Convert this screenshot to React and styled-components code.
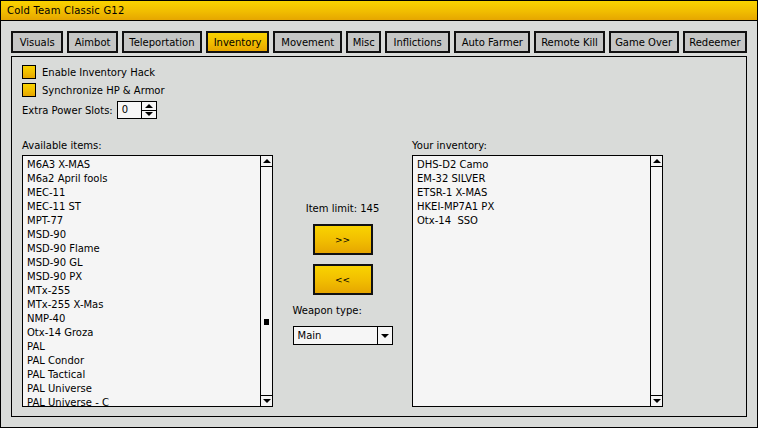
import React from 'react';
import styled, { createGlobalStyle } from 'styled-components';

const tabs = [
  { name: 'Visuals', w: 53 },
  { name: 'Aimbot', w: 51 },
  { name: 'Teleportation', w: 81 },
  { name: 'Inventory', w: 64 },
  { name: 'Movement', w: 70 },
  { name: 'Misc', w: 35 },
  { name: 'Inflictions', w: 66 },
  { name: 'Auto Farmer', w: 77 },
  { name: 'Remote Kill', w: 71 },
  { name: 'Game Over', w: 71 },
  { name: 'Redeemer', w: 65 },
];

const available = [
  'M6A3 X-MAS',
  'M6a2 April fools',
  'MEC-11',
  'MEC-11 ST',
  'MPT-77',
  'MSD-90',
  'MSD-90 Flame',
  'MSD-90 GL',
  'MSD-90 PX',
  'MTx-255',
  'MTx-255 X-Mas',
  'NMP-40',
  'Otx-14 Groza',
  'PAL',
  'PAL Condor',
  'PAL Tactical',
  'PAL Universe',
  'PAL Universe - C',
];

const owned = ['DHS-D2 Camo', 'EM-32 SILVER', 'ETSR-1 X-MAS', 'HKEI-MP7A1 PX', 'Otx-14  SSO'];

const App = () => {
  return (
    <>
      <GlobalStyle />
      <Window>
        <TitleBar>Cold Team Classic G12</TitleBar>
        <Body>
          <TabRow>
            {tabs.map((t) => (
              <Tab key={t.name} $w={t.w} $active={t.name === 'Inventory'}>
                {t.name}
              </Tab>
            ))}
          </TabRow>
          <Panel>
            <CheckRow>
              <CheckBox />
              <span>Enable Inventory Hack</span>
            </CheckRow>
            <CheckRow>
              <CheckBox />
              <span>Synchronize HP &amp; Armor</span>
            </CheckRow>
            <SpinRow>
              <span>Extra Power Slots:</span>
              <Spinner>
                <SpinValue>0</SpinValue>
                <SpinArrows>
                  <SpinButton>
                    <Arrow $up />
                  </SpinButton>
                  <SpinButton>
                    <Arrow />
                  </SpinButton>
                </SpinArrows>
              </Spinner>
            </SpinRow>

            <Lists>
              <ListColumn>
                <Label>Available items:</Label>
                <ListBox>
                  <Items>
                    {available.map((i) => (
                      <Item key={i}>{i}</Item>
                    ))}
                  </Items>
                  <ScrollBar>
                    <ScrollButton>
                      <Arrow $up />
                    </ScrollButton>
                    <Track>
                      <Thumb />
                    </Track>
                    <ScrollButton $bottom>
                      <Arrow />
                    </ScrollButton>
                  </ScrollBar>
                </ListBox>
              </ListColumn>

              <Middle>
                <Limit>Item limit: 145</Limit>
                <MoveButton>&gt;&gt;</MoveButton>
                <MoveButton>&lt;&lt;</MoveButton>
                <TypeBlock>
                  <TypeLabel>Weapon type:</TypeLabel>
                  <Select>
                    <SelectValue>Main</SelectValue>
                    <SelectArrow>
                      <Arrow />
                    </SelectArrow>
                  </Select>
                </TypeBlock>
              </Middle>

              <ListColumn>
                <Label>Your inventory:</Label>
                <ListBox>
                  <Items>
                    {owned.map((i) => (
                      <Item key={i}>{i}</Item>
                    ))}
                  </Items>
                  <ScrollBar>
                    <ScrollButton>
                      <Arrow $up />
                    </ScrollButton>
                    <Track />
                    <ScrollButton $bottom>
                      <Arrow />
                    </ScrollButton>
                  </ScrollBar>
                </ListBox>
              </ListColumn>
            </Lists>
          </Panel>
        </Body>
      </Window>
    </>
  );
};

const GlobalStyle = createGlobalStyle`
  html, body {
    margin: 0;
    padding: 0;
    background: #d9dbd9;
  }
  body {
    font-family: 'DejaVu Sans', Verdana, sans-serif;
    font-size: 10px;
    color: #000;
  }
`;

const gold = `linear-gradient(to bottom, #f9d300 0%, #f1bd00 55%, #e6a600 100%)`;

const Window = styled.div`
  width: 758px;
  height: 428px;
  box-sizing: border-box;
  border: 1px solid #000;
  background: #d9dbd9;
  display: flex;
  flex-direction: column;
`;

const TitleBar = styled.div`
  height: 19px;
  line-height: 19px;
  padding-left: 6px;
  background: ${gold};
  border-bottom: 1px solid #000;
  letter-spacing: 0.2px;
`;

const Body = styled.div`
  flex: 1;
  min-height: 0;
  display: flex;
  flex-direction: column;
  padding: 10px 10px 10px 10px;
  gap: 3px;
`;

const TabRow = styled.div`
  display: flex;
  gap: 4px;
`;

const Tab = styled.div`
  width: ${(p) => p.$w}px;
  height: 22px;
  box-sizing: border-box;
  border: 2px solid #111;
  background: ${(p) => (p.$active ? gold : '#c5c6c5')};
  display: flex;
  align-items: center;
  justify-content: center;
  white-space: nowrap;
  overflow: hidden;
`;

const Panel = styled.div`
  flex: 1;
  min-height: 0;
  border: 1px solid #000;
  padding: 8px 10px 9px 10px;
  display: flex;
  flex-direction: column;
`;

const CheckRow = styled.div`
  display: flex;
  align-items: center;
  gap: 6px;
  height: 14px;
  margin-bottom: 4px;
`;

const CheckBox = styled.div`
  width: 14px;
  height: 14px;
  box-sizing: border-box;
  border: 1px solid #000;
  background: ${gold};
`;

const SpinRow = styled.div`
  display: flex;
  align-items: center;
  gap: 4px;
`;

const Spinner = styled.div`
  display: flex;
  height: 18px;
  width: 40px;
  box-sizing: border-box;
  border: 1px solid #000;
  background: #f6f6f6;
`;

const SpinValue = styled.div`
  flex: 1;
  padding-left: 4px;
  line-height: 16px;
`;

const SpinArrows = styled.div`
  width: 14px;
  border-left: 1px solid #000;
  display: flex;
  flex-direction: column;
`;

const SpinButton = styled.div`
  flex: 1;
  display: flex;
  align-items: center;
  justify-content: center;
  & + & {
    border-top: 1px solid #000;
  }
`;

const Arrow = styled.div`
  width: 0;
  height: 0;
  border-left: 4px solid transparent;
  border-right: 4px solid transparent;
  ${(p) => (p.$up ? 'border-bottom: 4px solid #000;' : 'border-top: 4px solid #000;')}
`;

const Lists = styled.div`
  flex: 1;
  min-height: 0;
  display: flex;
  margin-top: 20px;
`;

const ListColumn = styled.div`
  width: 251px;
  display: flex;
  flex-direction: column;
`;

const Label = styled.div`
  height: 16px;
  line-height: 14px;
`;

const ListBox = styled.div`
  flex: 1;
  min-height: 0;
  display: flex;
  border: 1px solid #000;
  background: #f5f5f5;
  overflow: hidden;
`;

const Items = styled.div`
  flex: 1;
  padding: 2px 4px;
  overflow: hidden;
`;

const Item = styled.div`
  height: 14px;
  line-height: 14px;
  white-space: pre;
`;

const ScrollBar = styled.div`
  width: 11px;
  border-left: 1px solid #000;
  display: flex;
  flex-direction: column;
`;

const ScrollButton = styled.div`
  height: 10px;
  display: flex;
  align-items: center;
  justify-content: center;
  ${(p) => (p.$bottom ? 'border-top: 1px solid #000;' : 'border-bottom: 1px solid #000;')}
`;

const Track = styled.div`
  flex: 1;
  position: relative;
`;

const Thumb = styled.div`
  position: absolute;
  left: 3px;
  top: 152px;
  width: 5px;
  height: 6px;
  background: #000;
`;

const Middle = styled.div`
  width: 139px;
  display: flex;
  flex-direction: column;
  align-items: center;
  padding-top: 63px;
`;

const Limit = styled.div`
  height: 14px;
  line-height: 14px;
  margin-bottom: 8px;
`;

const MoveButton = styled.div`
  width: 60px;
  height: 31px;
  box-sizing: border-box;
  border: 2px solid #111;
  background: ${gold};
  display: flex;
  align-items: center;
  justify-content: center;
  font-size: 9px;
  margin-bottom: 9px;
`;

const TypeBlock = styled.div`
  width: 100px;
  display: flex;
  flex-direction: column;
`;

const TypeLabel = styled.div`
  height: 14px;
  line-height: 14px;
  margin-bottom: 8px;
`;

const Select = styled.div`
  height: 19px;
  box-sizing: border-box;
  border: 1px solid #000;
  background: #f6f6f6;
  display: flex;
`;

const SelectValue = styled.div`
  flex: 1;
  padding-left: 4px;
  line-height: 17px;
`;

const SelectArrow = styled.div`
  width: 14px;
  border-left: 1px solid #000;
  display: flex;
  align-items: center;
  justify-content: center;
`;

export default App;
